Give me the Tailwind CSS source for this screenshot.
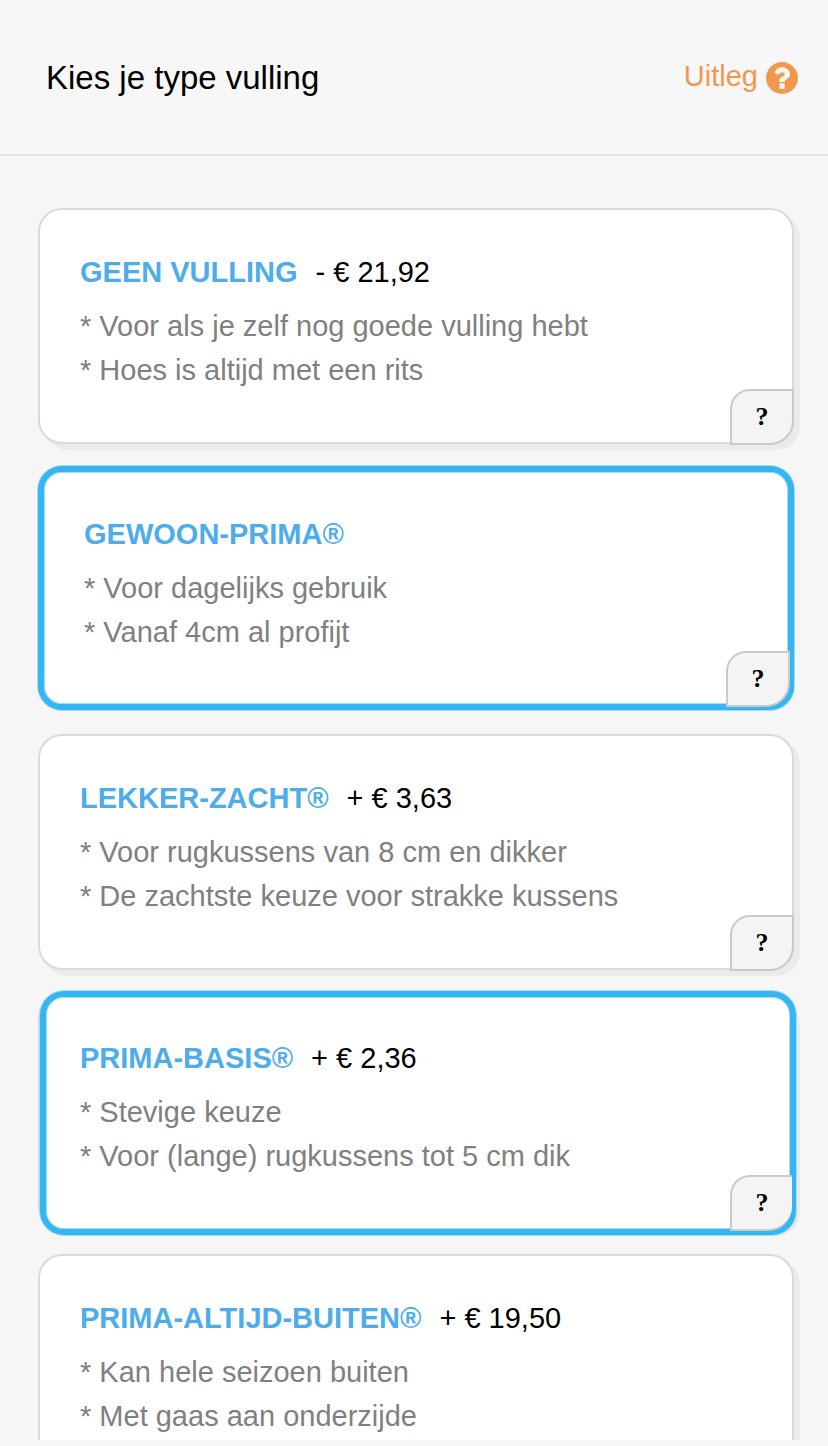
<!DOCTYPE html>
<html lang="nl">
<head>
  <meta charset="UTF-8">
  <meta name="viewport" content="width=device-width, initial-scale=1.0">
  <title>Kies je type vulling</title>
  <!-- Tailwind CSS -->
  <script src="https://cdn.jsdelivr.net/npm/@tailwindcss/browser@4"></script>
</head>
<body class="bg-[#f7f7f7] h-screen flex flex-col pb-1.5 text-black text-[29px] leading-[44px] font-['Liberation_Sans',Arial,sans-serif]">
  <!-- Header -->
  <header class="flex justify-between items-center h-[156px] shrink-0 pt-0.5 pl-[46px] pr-[30px] border-b-2 border-[#e4e4e4]">
    <h1 class="text-[33px]">Kies je type vulling</h1>
    <a href="#uitleg" class="flex items-center gap-2 text-[#f2984e]">
      <span class="pb-1">Uitleg</span>
      <svg class="w-8 h-8" viewBox="0 0 1536 1536" fill="currentColor" aria-hidden="true">
        <path d="M896 1248v-192q0-14-9-23t-23-9h-192q-14 0-23 9t-9 23v192q0 14 9 23t23 9h192q14 0 23-9t9-23zm256-672q0-88-55.5-163t-138.5-116-170-41q-243 0-371 213-15 24 8 42l132 100q7 6 19 6 16 0 25-12 53-68 86-92 34-24 86-24 48 0 85.5 26t37.5 59q0 38-20 61t-68 45q-63 28-115.5 86.5t-52.5 125.5v36q0 14 9 23t23 9h192q14 0 23-9t9-23q0-19 21.5-49.5t54.5-49.5q32-18 49-28.5t46-35 44.5-48 28-60.5 12.5-81zm384 192q0 209-103 385.5t-279.5 279.5-385.5 103-385.5-103-279.5-279.5-103-385.5 103-385.5 279.5-279.5 385.5-103 385.5 103 279.5 279.5 103 385.5z"/>
      </svg>
    </a>
  </header>

  <!-- Options -->
  <main class="flex-1 min-h-0 overflow-y-auto [scrollbar-width:none] bg-[#f6f6f6] pt-[52px] pl-[38px] pr-[34px]">
    <div class="flex flex-col gap-6">
      <article class="relative bg-white border-2 border-[#dadada] rounded-3xl shadow-[6px_6px_0_#ebebeb] px-10 pt-10 pb-[50px]">
        <div class="flex gap-[18px] mb-2.5">
          <h2 class="font-bold text-[#4dacea]">GEEN VULLING</h2>
          <span>- € 21,92</span>
        </div>
        <p class="text-[#808080]">* Voor als je zelf nog goede vulling hebt<br>* Hoes is altijd met een rits</p>
        <button type="button" aria-label="Uitleg geen vulling" class="absolute -right-0.5 -bottom-[3px] w-16 h-14 bg-[#f4f4f4] border-2 border-[#cacaca] rounded-tl-[20px] rounded-br-3xl font-bold text-[26px] font-['Liberation_Serif',serif]">?</button>
      </article>

      <article class="relative -mt-0.5 bg-white border-6 border-[#35b5f1] rounded-3xl shadow-[0_0_0_1px_#a5dcf6,inset_0_0_0_1px_#a5dcf6] px-10 pt-10 pb-[50px]">
        <div class="flex gap-[18px] mb-2.5">
          <h2 class="font-bold text-[#4dacea]">GEWOON-PRIMA®</h2>
        </div>
        <p class="text-[#808080]">* Voor dagelijks gebruik<br>* Vanaf 4cm al profijt</p>
        <button type="button" aria-label="Uitleg Gewoon-Prima" class="absolute -right-0.5 -bottom-[3px] w-16 h-14 bg-[#f4f4f4] border-2 border-[#cacaca] rounded-tl-[20px] rounded-br-3xl font-bold text-[26px] font-['Liberation_Serif',serif]">?</button>
      </article>

      <article class="relative bg-white border-2 border-[#dadada] rounded-3xl shadow-[6px_6px_0_#ebebeb] px-10 pt-10 pb-[50px]">
        <div class="flex gap-[18px] mb-2.5">
          <h2 class="font-bold text-[#4dacea]">LEKKER-ZACHT®</h2>
          <span>+ € 3,63</span>
        </div>
        <p class="text-[#808080]">* Voor rugkussens van 8 cm en dikker<br>* De zachtste keuze voor strakke kussens</p>
        <button type="button" aria-label="Uitleg Lekker-Zacht" class="absolute -right-0.5 -bottom-[3px] w-16 h-14 bg-[#f4f4f4] border-2 border-[#cacaca] rounded-tl-[20px] rounded-br-3xl font-bold text-[26px] font-['Liberation_Serif',serif]">?</button>
      </article>

      <article class="relative bg-white border-2 border-[#dadada] rounded-3xl shadow-[6px_6px_0_#ebebeb] px-10 pt-10 pb-[50px]">
        <div class="flex gap-[18px] mb-2.5">
          <h2 class="font-bold text-[#4dacea]">PRIMA-BASIS®</h2>
          <span>+ € 2,36</span>
        </div>
        <p class="text-[#808080]">* Stevige keuze<br>* Voor (lange) rugkussens tot 5 cm dik</p>
        <!-- Highlight ring -->
        <div class="absolute left-0 -right-1 -top-[5px] -bottom-[7px] border-6 border-[#35b5f1] rounded-3xl shadow-[0_0_0_1px_#a5dcf6,inset_0_0_0_1px_#a5dcf6] pointer-events-none"></div>
        <button type="button" aria-label="Uitleg Prima-Basis" class="absolute right-0 -bottom-[3px] w-[62px] h-14 bg-[#f4f4f4] border-2 border-r-0 border-[#cacaca] rounded-tl-[20px] rounded-br-3xl font-bold text-[26px] font-['Liberation_Serif',serif]">?</button>
      </article>

      <article class="relative bg-white border-2 border-[#dadada] rounded-3xl shadow-[6px_6px_0_#ebebeb] px-10 pt-10 pb-[94px]">
        <div class="flex gap-[18px] mb-2.5">
          <h2 class="font-bold text-[#4dacea]">PRIMA-ALTIJD-BUITEN®</h2>
          <span>+ € 19,50</span>
        </div>
        <p class="text-[#808080]">* Kan hele seizoen buiten<br>* Met gaas aan onderzijde</p>
      </article>
    </div>
  </main>
</body>
</html>
